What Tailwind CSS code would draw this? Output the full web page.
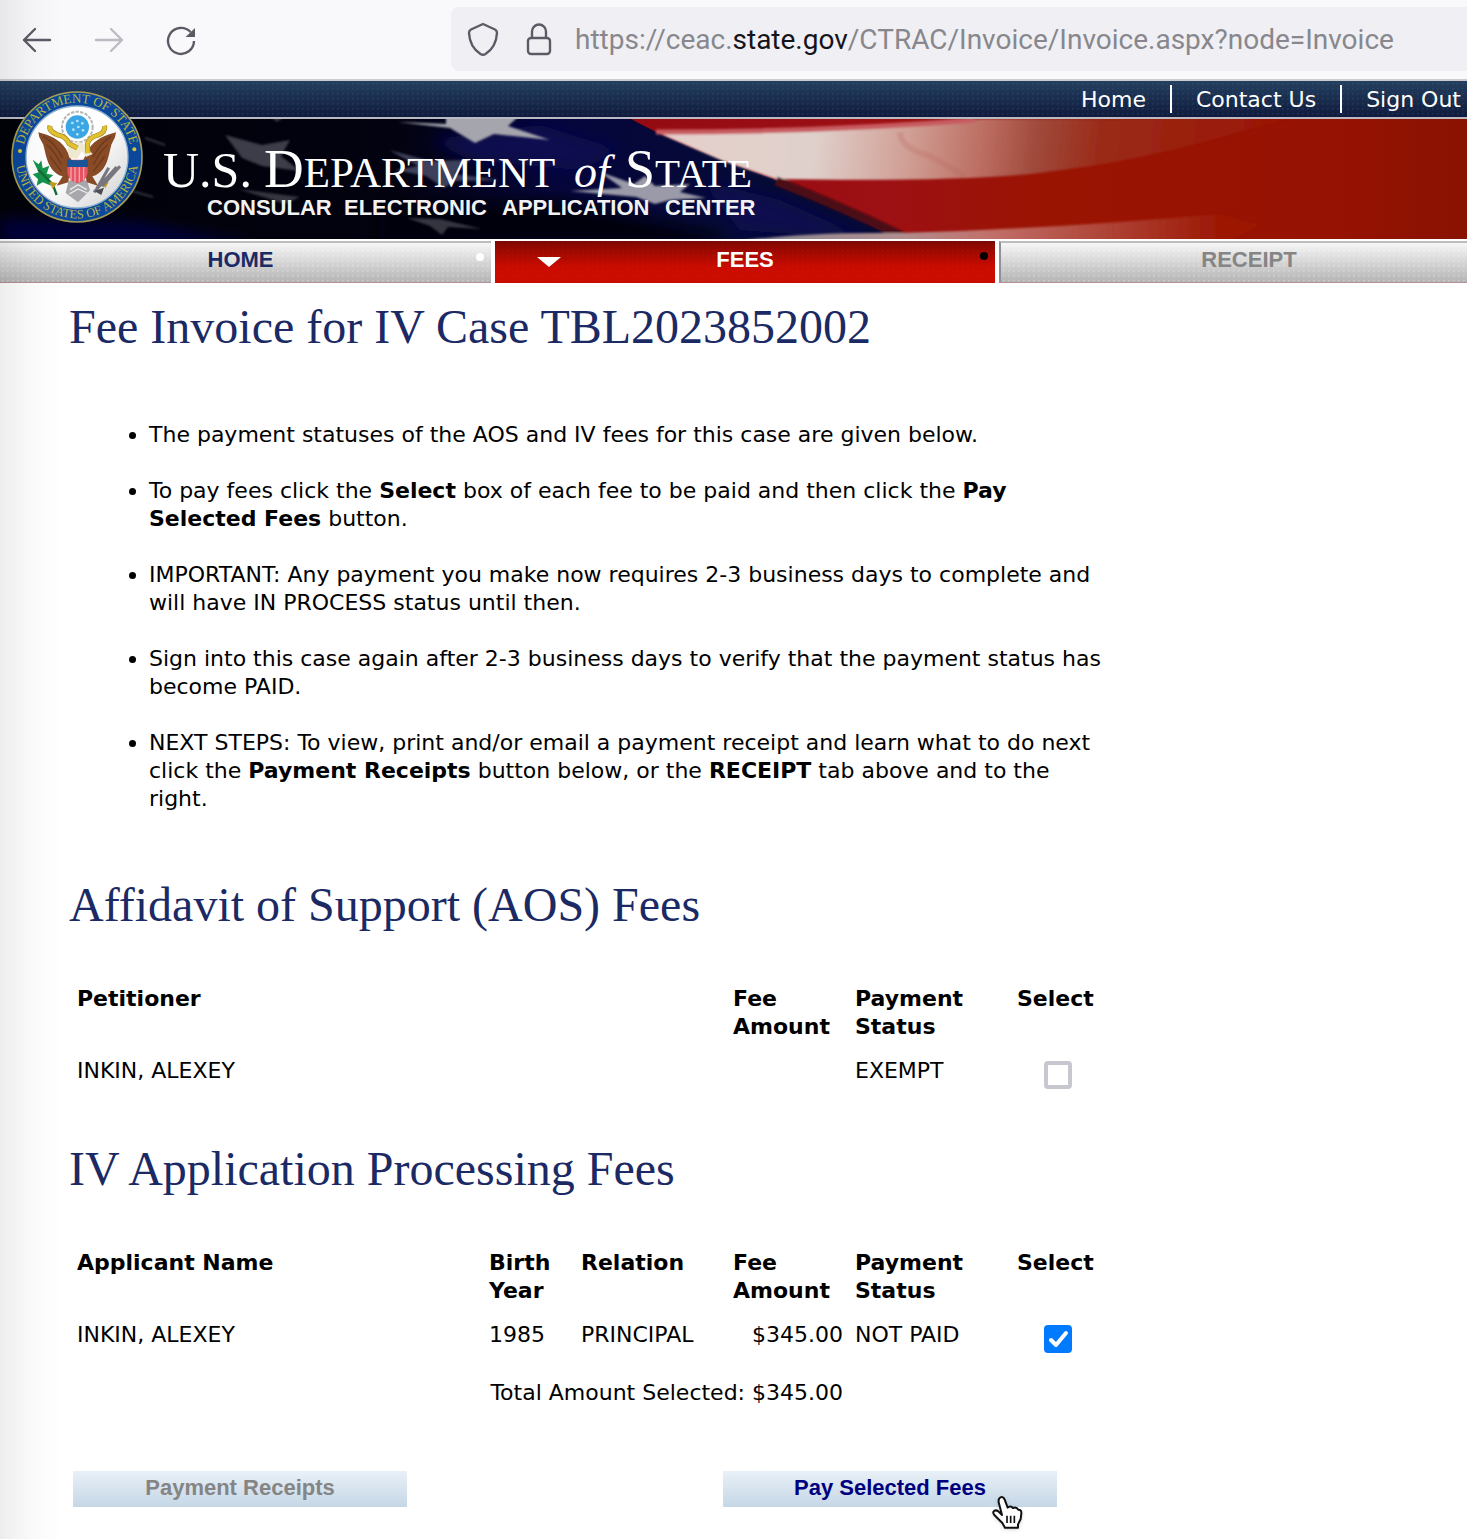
<!DOCTYPE html>
<html lang="en">
<head>
<meta charset="utf-8">
<title>Fee Invoice</title>
<script src="https://cdn.jsdelivr.net/npm/@tailwindcss/browser@4"></script>
</head>
<body class="relative min-h-screen overflow-x-hidden bg-white font-['DejaVu_Sans',Verdana,sans-serif] text-[22px] leading-7 text-black">

<!-- Browser toolbar -->
<div class="flex h-[81px] items-center border-b-2 border-[#cccccf] bg-[#f9f9fb]">
  <div class="flex w-[451px] shrink-0 items-center gap-10 pl-5 text-[#5b5b66]">
    <button aria-label="Back" class="size-8"><svg viewBox="0 0 32 32" class="size-8" fill="none" stroke="currentColor" stroke-width="2.4" stroke-linecap="round" stroke-linejoin="round"><path d="M30 16H4M15 5 4 16l11 11"/></svg></button>
    <button aria-label="Forward" disabled class="size-8 text-[#bcbcc2]"><svg viewBox="0 0 32 32" class="size-8" fill="none" stroke="currentColor" stroke-width="2.4" stroke-linecap="round" stroke-linejoin="round"><path d="M4 16h26M19 5l11 11-11 11"/></svg></button>
    <button aria-label="Reload" class="size-8"><svg viewBox="0 0 32 32" class="size-8" fill="none" stroke="currentColor" stroke-width="2.4"><path d="M30 17A13 13 0 1 1 26.500 8"/><path d="M31 4v9h-9.500z" fill="currentColor" stroke="none"/></svg></button>
  </div>
  <div class="mb-[2px] flex h-16 grow items-center overflow-hidden rounded-l-lg bg-[#f0f0f4] pl-4 text-[#5b5b66]">
    <svg viewBox="0 0 32 34" class="h-[34px] w-8 shrink-0" fill="none" stroke="currentColor" stroke-width="2.4" stroke-linejoin="round"><path d="M16 2 28 7.500Q30 8.500 30 11C29.500 20 25.500 27.500 18.500 32q-2.500 1.500-5 0C6.500 27.500 2.500 20 2 11Q2 8.500 4 7.500z"/></svg>
    <svg viewBox="0 0 28 34" class="ml-[26px] h-[34px] w-7 shrink-0" fill="none" stroke="currentColor" stroke-width="2.400"><rect x="3" y="16" width="22" height="16" rx="3"/><path d="M7 16V9.500a7 7 0 0 1 14 0V16"/></svg>
    <div class="ml-[22px] whitespace-nowrap pt-[2px] font-[Roboto,sans-serif] text-[28px] text-[#87878d]">https://ceac.<span class="text-[#15141a]">state.gov</span>/CTRAC/Invoice/Invoice.aspx?node=Invoice</div>
  </div>
</div>

<!-- Site header -->
<header class="relative">
  <nav class="flex h-9 items-center justify-end bg-[radial-gradient(circle,#3b639040_1px,transparent_1px),linear-gradient(#24405f,#101a3c)] bg-[length:5px_5px,100%_100%] pr-[6px] text-white">
    <a href="#" class="pt-[2px]">Home</a>
    <a href="#" class="ml-6 border-l-2 border-white pl-6 leading-[26px] pt-[2px]">Contact Us</a>
    <a href="#" class="ml-6 border-l-2 border-white pl-6 leading-[26px] pt-[2px]">Sign Out</a>
  </nav>
  <svg viewBox="0 117 1467 122" preserveAspectRatio="xMinYMid slice" class="block h-[122px] w-full" role="img" aria-label="U.S. Department of State, Consular Electronic Application Center">
    <defs>
      <linearGradient id="sky" x1="0" x2="1467" gradientUnits="userSpaceOnUse"><stop offset="0" stop-color="#010108"/><stop offset=".27" stop-color="#020210"/><stop offset=".38" stop-color="#05053c"/><stop offset=".5" stop-color="#050a36"/></linearGradient>
      <linearGradient id="red" x1="630" x2="1467" gradientUnits="userSpaceOnUse"><stop offset="0" stop-color="#930b12"/><stop offset=".3" stop-color="#9d1014"/><stop offset=".5" stop-color="#9a1402"/><stop offset=".85" stop-color="#961202"/><stop offset="1" stop-color="#891201"/></linearGradient>
      <linearGradient id="white" x1="656" y1="150" x2="1280" y2="220" gradientUnits="userSpaceOnUse"><stop offset="0" stop-color="#e5cfcb"/><stop offset=".25" stop-color="#e0d0cb"/><stop offset=".4" stop-color="#d09e94"/><stop offset=".52" stop-color="#bb6c60"/><stop offset=".6" stop-color="#a04a3c"/><stop offset=".7" stop-color="#9a2b19"/><stop offset="1" stop-color="#9a1402"/></linearGradient>
      <linearGradient id="hem" x1="760" x2="1220" gradientUnits="userSpaceOnUse"><stop offset="0" stop-color="#8b8791"/><stop offset=".3" stop-color="#b08f90"/><stop offset=".5" stop-color="#c1706a"/><stop offset="1" stop-color="#9c1804"/></linearGradient>
      <filter id="soft" x="-20%" y="-20%" width="140%" height="140%"><feGaussianBlur stdDeviation="1.200"/></filter>
      <filter id="haze" x="-20%" y="-50%" width="140%" height="200%"><feGaussianBlur stdDeviation="7"/></filter>
    </defs>
    <rect y="117" width="1467" height="122" fill="url(#sky)"/>
    <g filter="url(#haze)"><path d="M0 218 140 222 260 245H0z" fill="#05053a"/><path d="M430 140 540 125 620 150 580 170 470 160zM700 180 780 200 870 240 740 230z" fill="#0a0d50"/><path d="M380 205 560 200 720 235 720 245H380z" fill="#01010a"/></g>
    <path d="M628 117C650 131 700 152 776 180Q840 210 905 241H1480V117z" fill="url(#red)"/>
    <g filter="url(#soft)">
      <path d="M656 132C740 133 850 131 980 119H1290C1220 135 1160 160 1030 174Q940 182 776 179L723 161z" fill="url(#white)"/>
      <path d="M656 132C740 132 850 130 975 120" fill="none" stroke="#c75b60" stroke-width="5"/>
      <path d="M900 132Q900 148 930 156L965 176" fill="none" stroke="#b8645a" stroke-opacity=".25" stroke-width="6"/>
      <path d="M776 181Q840 206 902 236" fill="none" stroke="#4b0812" stroke-width="9"/>
      <path d="M740 241Q800 232 900 233 1050 229 1220 214L1260 225 1230 241z" fill="url(#hem)"/>
      <path d="M398 122 446 124V116H519L508 126 550 140 494 134 475 143 450 128z" fill="#a5a5ae"/>
      <path d="M225 135 262 145 290 140 281 156 300 171 262 166 242 158z" fill="#3c3e48"/>
      <path d="M389 150 430 161 470 160 455 174 500 180 455 181 444 188 426 176 395 170 418 166z" fill="#3e405a"/>
      <path d="M600 172 634 184 645 176 655 186 690 184 680 192 706 198 670 200 655 204 636 197 570 191 622 188z" fill="#9a9aa8"/>
      <path d="M407 218 440 219 482 229 448 227 442 235 430 226zM238 189 300 197 285 204zM270 117h14l-7 5z" fill="#34363f"/>
      <path d="M145 138l20 7M132 191l21 6" stroke="#31333d" stroke-width="2"/>
    </g>
    <rect y="117" width="1467" height="2" fill="#b9bac4"/>
    <g fill="#fff" font-family="Liberation Serif, Times New Roman, serif">
      <text x="163" y="187" font-size="50">U.S.</text>
      <text x="264" y="187" font-size="55">D<tspan font-size="43">EPARTMENT</tspan></text>
      <text x="574" y="187" font-size="46" font-style="italic">of</text>
      <text x="625" y="187" font-size="54">S<tspan font-size="41">TATE</tspan></text>
    </g>
    <g fill="#f2f2f2" font-family="Liberation Sans, Arial, sans-serif" font-weight="700" font-size="22">
      <text x="207" y="215">CONSULAR</text>
      <text x="344" y="215">ELECTRONIC</text>
      <text x="502" y="215">APPLICATION</text>
      <text x="665" y="215">CENTER</text>
    </g>
  </svg>

  <!-- Department seal, overlapping the link bar and the banner -->
  <svg viewBox="33 44 396 396" class="absolute left-[11px] top-[10px] size-[132px]" role="img" aria-label="Department of State seal">
    <defs>
      <path id="arcTop" d="M68 242a163 163 0 0 1 326 0"/>
      <path id="arcBottom" d="M47 242a184 184 0 0 0 368 0"/>
      <linearGradient id="disc" x1="0" y1="0" x2="1" y2="1"><stop offset=".5" stop-color="#fff"/><stop offset="1" stop-color="#cfcfcf"/></linearGradient>
    </defs>
    <circle cx="231" cy="242" r="195" fill="#0b479b" stroke="#a59d56" stroke-width="5"/>
    <circle cx="231" cy="242" r="153" fill="url(#disc)" stroke="#8fb2cf" stroke-width="4"/>
    <g fill="#b5b544" font-family="Liberation Serif, serif" font-size="39" text-anchor="middle">
      <text><textPath href="#arcTop" startOffset="50%">DEPARTMENT OF STATE</textPath></text>
      <text font-size="38"><textPath href="#arcBottom" startOffset="50%">UNITED STATES OF AMERICA</textPath></text>
    </g>
    <circle cx="60" cy="224" r="6" fill="#d8c92f"/><circle cx="403" cy="219" r="6" fill="#d8c92f"/>
    <circle cx="232" cy="152" r="46" fill="none" stroke="#b5b5b5" stroke-width="6" stroke-dasharray="10 4"/>
    <circle cx="232" cy="152" r="35" fill="#3aa7e4"/>
    <g fill="#b9e2f8"><circle cx="217" cy="140" r="4"/><circle cx="232" cy="134" r="4"/><circle cx="247" cy="141" r="4"/><circle cx="220" cy="160" r="4"/><circle cx="235" cy="152" r="4"/><circle cx="249" cy="162" r="4"/><circle cx="232" cy="174" r="4"/></g>
    <path d="M205 316 232 296 262 316 270 342 234 378 197 350z" fill="#a8a8ac"/>
    <path d="M210 340 234 325 260 340M208 353 234 338 262 350" fill="none" stroke="#ededed" stroke-width="4"/>
    <path d="M115 168C150 178 178 188 198 218L214 250 205 318 170 328 188 300C158 292 145 265 138 238L130 205 118 183zM348 168C314 178 286 188 266 218L250 250 260 318 294 328 277 300C306 292 320 265 326 238L334 205 345 183z" fill="#884b26"/>
    <path d="M130 180Q165 200 188 244M140 205Q165 225 184 265M150 240 184 285M334 180Q300 200 278 244M324 205Q299 225 280 265M314 240 280 285" fill="none" stroke="#6b3a1f" stroke-width="4"/>
    <path d="M202 220C212 197 236 190 252 204L278 233 258 242 246 224 232 248 208 244z" fill="#efe9d2"/>
    <path d="M150 148Q145 165 174 176 198 180 207 202L232 215M314 148Q318 168 290 178 270 182 262 202L264 230" fill="none" stroke="#a68a20" stroke-width="15"/>
    <path d="M150 148Q145 165 174 176 198 180 207 202L232 215M314 148Q318 168 290 178 270 182 262 202L264 230" fill="none" stroke="#e2c12f" stroke-width="11"/>
    <path d="M202 250h61v40q-4 25-30 31-27-6-31-31z" fill="#e65362"/>
    <path d="M213 272v40M225 272v46M238 272v46M251 272v40" stroke="#f3a6aa" stroke-width="4"/>
    <path d="M201 248q31 8 63 0v24h-63z" fill="#1a5599"/>
    <path d="M98 250l18 14 8-12 4 24 20-8-8 24 20 4-16 14 10 18-26-10-18 10 4-20-16-14 18-6z" fill="#15944a"/>
    <path d="M115 280 158 324 170 356" fill="none" stroke="#126b37" stroke-width="7"/>
    <path d="M148 316l24 4-14 18zM302 315l24 3-10 18z" fill="#c49b1d"/>
    <path d="M282 348 350 272M290 338 326 274M306 330 360 270" fill="none" stroke="#77767e" stroke-width="9"/>
    <path d="M283 344 312 334 304 356z" fill="#4c4c55"/>
  </svg>

  <!-- Section tabs -->
  <nav class="flex h-11 gap-1 overflow-hidden pt-[2px] font-['Liberation_Sans',Arial,sans-serif] font-bold leading-[34px]">
    <a href="#" class="relative w-[491px] shrink-0 border-t-2 border-b border-t-[#bdbdbd] border-b-[#b58f92] bg-[radial-gradient(circle,#ffffff38_1px,transparent_1px),linear-gradient(#f6f6f6,#b4b4b4)] bg-[length:5px_5px,100%_100%] pr-[10px] text-center text-[#1b2a64]">HOME<span class="absolute right-[7px] top-[10px] size-2 rounded-full bg-white"></span></a>
    <a href="#" class="relative w-[500px] shrink-0 border-t-2 border-[#7a0a05] bg-[radial-gradient(circle,#ff20101c_1px,transparent_1px),linear-gradient(#850800,#c90b00_60%)] bg-[length:5px_5px,100%_100%] text-center text-white">FEES<span class="absolute left-[42px] top-[14px] border-x-[12px] border-t-[10px] border-x-transparent border-t-white"></span><span class="absolute right-[7px] top-[9px] size-2 rounded-full bg-black"></span></a>
    <a href="#" class="w-[500px] shrink-0 border-t-2 border-b border-l-2 border-t-[#bdbdbd] border-b-[#b58f92] border-l-[#909096] bg-[radial-gradient(circle,#ffffff38_1px,transparent_1px),linear-gradient(#f6f6f6,#b4b4b4)] bg-[length:5px_5px,100%_100%] pr-[2px] text-center text-[#858585]">RECEIPT</a>
  </nav>
</header>

<main class="max-w-[1117px] pb-8 pl-[69px] pt-4">
  <h1 class="font-['Liberation_Serif','Times_New_Roman',serif] text-5xl leading-14 text-[#1b2a64]">Fee Invoice for IV Case TBL2023852002</h1>

  <ul class="mt-[66px] list-disc space-y-7 pl-20 pr-2">
    <li>The payment statuses of the AOS and IV fees for this case are given below.</li>
    <li>To pay fees click the <b>Select</b> box of each fee to be paid and then click the <b>Pay Selected Fees</b> button.</li>
    <li>IMPORTANT: Any payment you make now requires 2-3 business days to complete and will have IN PROCESS status until then.</li>
    <li>Sign into this case again after 2-3 business days to verify that the payment status has become PAID.</li>
    <li>NEXT STEPS: To view, print and/or email a payment receipt and learn what to do next click the <b>Payment Receipts</b> button below, or the <b>RECEIPT</b> tab above and to the right.</li>
  </ul>

  <h2 class="mt-16 font-['Liberation_Serif','Times_New_Roman',serif] text-5xl leading-14 text-[#1b2a64]">Affidavit of Support (AOS) Fees</h2>
  <table class="mt-11 w-[1038px] table-fixed text-left align-top">
    <colgroup><col><col class="w-[122px]"><col class="w-[162px]"><col class="w-[98px]"></colgroup>
    <thead><tr class="align-top">
      <th class="p-2">Petitioner</th><th class="p-2">Fee Amount</th><th class="p-2">Payment Status</th><th class="p-2">Select</th>
    </tr></thead>
    <tbody><tr class="align-top">
      <td class="p-2">INKIN, ALEXEY</td><td></td><td class="p-2">EXEMPT</td>
      <td class="px-2 pb-1 pt-3"><input type="checkbox" disabled aria-label="Select AOS fee for INKIN, ALEXEY" class="mx-auto block size-7 appearance-none rounded-sm border-4 border-[#c7c7cf] bg-white"></td>
    </tr></tbody>
  </table>

  <h2 class="mt-12 font-['Liberation_Serif','Times_New_Roman',serif] text-5xl leading-14 text-[#1b2a64]">IV Application Processing Fees</h2>
  <table class="mt-11 w-[1038px] table-fixed text-left">
    <colgroup><col><col class="w-[92px]"><col class="w-[152px]"><col class="w-[122px]"><col class="w-[162px]"><col class="w-[98px]"></colgroup>
    <thead><tr class="align-top">
      <th class="p-2">Applicant Name</th><th class="p-2">Birth Year</th><th class="p-2">Relation</th><th class="p-2">Fee Amount</th><th class="p-2">Payment Status</th><th class="p-2">Select</th>
    </tr></thead>
    <tbody>
      <tr class="align-top">
        <td class="p-2">INKIN, ALEXEY</td><td class="p-2">1985</td><td class="p-2">PRINCIPAL</td><td class="py-2 pr-1 text-right">$345.00</td><td class="p-2">NOT PAID</td>
        <td class="px-2 pb-2 pt-3"><span class="relative mx-auto block size-7"><input type="checkbox" checked aria-label="Select IV fee for INKIN, ALEXEY" class="block size-7 appearance-none rounded-sm bg-[#007aff]"><svg viewBox="0 0 28 28" class="pointer-events-none absolute inset-0 size-7" fill="none" stroke="#fff" stroke-width="4" stroke-linecap="round" stroke-linejoin="round"><path d="M7 15l5 5L22 8"/></svg></span></td>
      </tr>
      <tr><td colspan="4" class="pb-2 pr-1 pt-[18px] text-right">Total Amount Selected: $345.00</td><td colspan="2"></td></tr>
    </tbody>
  </table>

  <div class="ml-1 mt-14 flex w-[984px] justify-between font-['Liberation_Sans',Arial,sans-serif] font-bold">
    <button disabled class="h-9 w-[334px] bg-linear-to-b from-[#e9f0f7] to-[#c5d7e6] pb-[2px] text-[#858585]">Payment Receipts</button>
    <div class="relative">
      <button class="h-9 w-[334px] bg-linear-to-b from-[#e9f0f7] to-[#c5d7e6] pb-[2px] text-[#00007f]">Pay Selected Fees</button>
      <svg viewBox="0 0 96 108" class="absolute left-[268px] top-6 h-9 w-8 drop-shadow" fill="#fff" stroke="#111" stroke-width="6" stroke-linejoin="round"><path d="M25 10C31 3 38 6 41 14L50 38Q58 30 66 39 76 34 82 44 92 44 91 55L89 72 81 88V98H42L34 84 10 60C2 50 12 42 22 49L33 60 23 22Q22 14 25 10z"/><path d="M48 62v22M59 62v22M70 62v22" stroke-width="5"/></svg>
    </div>
  </div>
</main>

<!-- Window-edge shading -->
<div class="pointer-events-none absolute inset-y-0 left-0 w-16 bg-linear-to-r from-black/7 via-black/2 to-transparent"></div>
</body>
</html>
